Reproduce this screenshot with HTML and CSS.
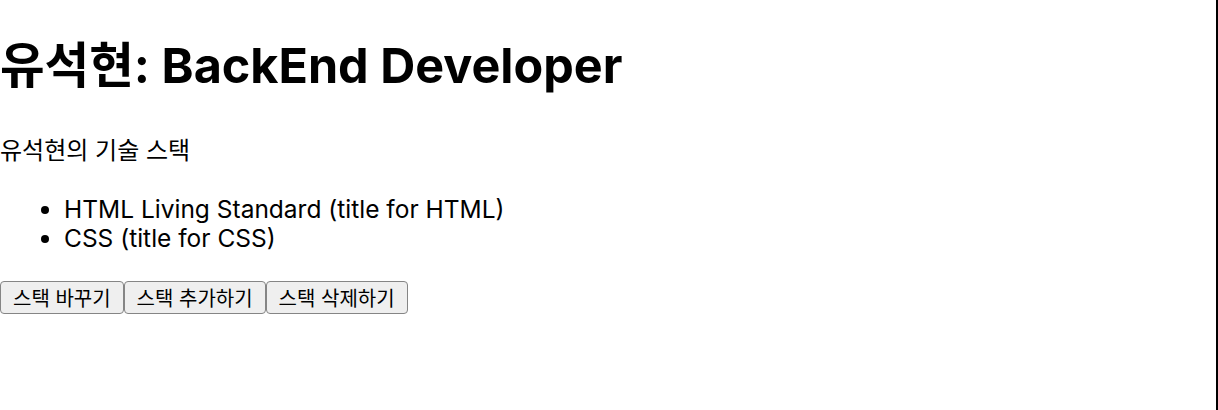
FILE: index.html
```html
<!DOCTYPE html>
<html lang="ko">
<head>
<meta charset="utf-8">
<title>유석현: BackEnd Developer</title>
<link rel="stylesheet" href="styles.css">
</head>
<body>
<div class="page">
  <h1 class="title">유석현: BackEnd Developer</h1>
  <p class="subtitle">유석현의 기술 스택</p>
  <ul class="stack-list">
    <li>HTML Living Standard (title for HTML)</li>
    <li>CSS (title for CSS)</li>
  </ul>
  <div class="actions">
    <button class="btn" type="button">스택 바꾸기</button>
    <button class="btn" type="button">스택 추가하기</button>
    <button class="btn" type="button">스택 삭제하기</button>
  </div>
</div>
</body>
</html>
```

FILE: styles.css
```css
html, body {
  margin: 0;
  padding: 0;
  background: #fff;
}

body {
  font-family: Inter, "Noto Sans CJK KR", sans-serif;
  color: #000;
}

.page {
  box-sizing: border-box;
  height: 410px;
  border-right: 2px solid #000;
  overflow: hidden;
}

.title {
  margin: 37px 0 0;
  font-size: 48.5px;
  line-height: 58px;
  font-weight: 700;
  letter-spacing: 0;
}

.subtitle {
  margin: 41px 0 0;
  font-size: 24px;
  line-height: 30px;
}

.stack-list {
  margin: 29px 0 0;
  padding-left: 64px;
  font-size: 24.5px;
  line-height: 28.5px;
}

.actions {
  display: flex;
  margin-top: 29px;
}

.btn {
  font-family: "Noto Sans CJK KR", Inter, sans-serif;
  font-size: 20px;
  line-height: 23px;
  padding: 4px 12px;
  color: #000;
  background: #efefef;
  border: 1px solid #858585;
  border-radius: 4px;
  margin: 0;
}
```
